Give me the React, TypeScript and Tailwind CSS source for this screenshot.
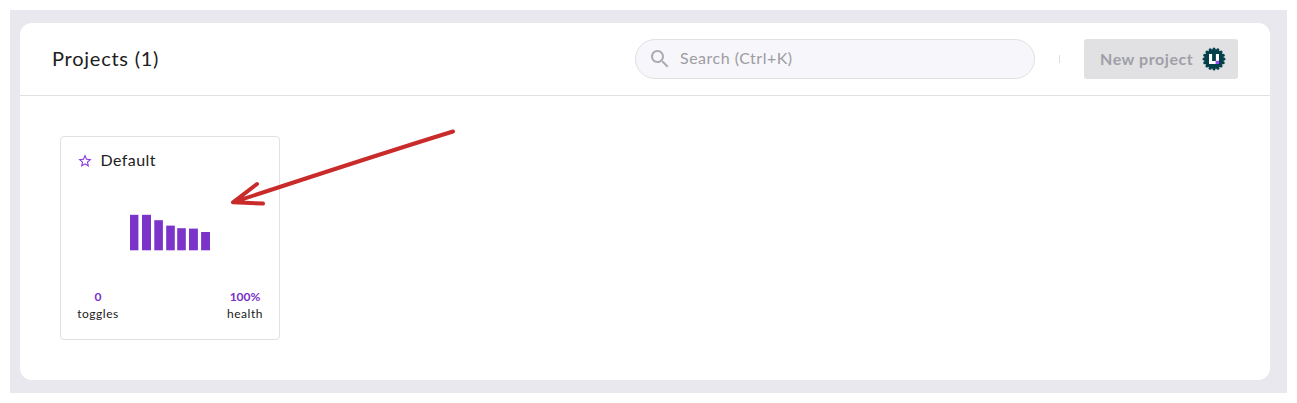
const bars = [
  { x: 0, w: 8.4, y: 0 },
  { x: 12, w: 9, y: 0 },
  { x: 24.3, w: 8.6, y: 5.4 },
  { x: 36.2, w: 8.6, y: 10.8 },
  { x: 47.2, w: 8.6, y: 13.4 },
  { x: 59, w: 8.9, y: 13.8 },
  { x: 71.1, w: 8.9, y: 17.2 },
];

function UnleashBadge() {
  const scallops = Array.from({ length: 16 }, (_, i) => {
    const a = (i * Math.PI) / 8;
    return { cx: 12 + 10 * Math.sin(a), cy: 12 - 10 * Math.cos(a) };
  });
  return (
    <svg className="ml-[9px] h-6 w-6 shrink-0" viewBox="0 0 24 24">
      <g fill="#04404a">
        <circle cx="12" cy="12" r="10" />
        {scallops.map((s, i) => (
          <circle key={i} cx={s.cx} cy={s.cy} r="1.5" />
        ))}
      </g>
      <path d="M7 7h3.1v6.9h3.8V7H17v10H7z" fill="#fff" />
      <path d="M13.6 13.8H17V17h-3.4z" fill="#9747ff" />
    </svg>
  );
}

function SearchBox() {
  return (
    <div className="flex h-10 w-[400px] items-center rounded-full border border-[#e1e1e3] bg-[#f6f6fb] pl-[12px]">
      <svg className="h-6 w-6" viewBox="0 0 24 24" fill="#adabb3">
        <path d="M15.5 14h-.79l-.28-.27C15.41 12.59 16 11.11 16 9.5 16 5.91 13.09 3 9.5 3S3 5.91 3 9.5 5.91 16 9.5 16c1.61 0 3.09-.59 4.23-1.57l.27.28v.79l5 4.99L20.49 19l-4.99-5zm-6 0C7.01 14 5 11.99 5 9.5S7.01 5 9.5 5 14 7.01 14 9.5 11.99 14 9.5 14z" />
      </svg>
      <span className="ml-[8px] pb-0.5 text-[16px] leading-5 tracking-[0.5px] text-[#9d9ca1]">Search (Ctrl+K)</span>
    </div>
  );
}

function ProjectCard() {
  return (
    <div className="relative flex h-[204px] w-[220px] flex-col rounded-[4px] border border-[#e1e1e3] px-4 pt-[14px]">
      <div className="flex h-5 items-center">
        <svg className="h-4 w-4" viewBox="0 0 24 24" fill="#8a35e0">
          <path d="m22 9.24-7.19-.62L12 2 9.19 8.63 2 9.24l5.46 4.73L5.82 21 12 17.27 18.18 21l-1.63-7.03L22 9.24zM12 15.4l-3.76 2.27 1-4.28-3.32-2.88 4.38-.38L12 6.1l1.71 4.04 4.38.38-3.32 2.88 1 4.28L12 15.4z" />
        </svg>
        <span className="ml-[7.5px] pb-0.5 text-[16px] leading-5 tracking-[0.45px] text-[#202021]">Default</span>
      </div>
      <svg className="mt-[43px] ml-[53px] h-9 w-20 overflow-visible" viewBox="0 0 80 36">
        {bars.map((b) => (
          <rect key={b.x} x={b.x} y={b.y + 0.8} width={b.w} height={35.5 - b.y} fill="#7b33c9" />
        ))}
      </svg>
      <div className="mt-[38px] flex justify-between text-center text-[12px] leading-[17px] text-[#202021]">
        <div className="w-[42px]">
          <div className="font-bold text-[#7a2fc8]">0</div>
          <div className="tracking-[0.5px]">toggles</div>
        </div>
        <div className="-mr-px w-[38px]">
          <div className="font-bold text-[#7a2fc8]">100%</div>
          <div className="tracking-[0.5px]">health</div>
        </div>
      </div>
      <svg
        className="pointer-events-none absolute top-[-17px] left-[159px] h-[100px] w-[250px]"
        viewBox="220 120 250 100"
        fill="none"
        stroke="#c92a2a"
        strokeWidth="4"
        strokeLinecap="round"
        strokeLinejoin="round"
      >
        <path d="M453 131.5 C380 154 310 177 233 202.3 M257 184 L233 202.3 L263 203.6" />
      </svg>
    </div>
  );
}

export default function App() {
  return (
    <div className="h-[403px] w-[1297px] bg-white p-[10px] font-['Lato',sans-serif]">
      <div className="h-[383px] bg-[#e9e8ee] pt-[13px] pr-[17px] pl-[10px]">
        <main className="h-[357px] rounded-[12px] bg-white">
          <header className="flex h-[73px] items-center border-b border-[#e1e1e3] pr-8 pl-8">
            <h1 className="pb-0.5 text-[20px] leading-6 tracking-[0.75px] text-[#202021]">Projects (1)</h1>
            <div className="ml-auto flex items-center">
              <SearchBox />
              <div className="ml-6 h-2 w-px bg-[#dfdfe2]" />
              <button className="ml-6 flex h-10 w-[154px] items-center rounded-[3px] bg-[#e1e1e3] pl-4 text-[16px] font-bold text-[#a09fa8]">
                <span className="w-[93px] whitespace-nowrap pb-px tracking-[0.55px]">New project</span>
                <UnleashBadge />
              </button>
            </div>
          </header>
          <div className="p-10">
            <ProjectCard />
          </div>
        </main>
      </div>
    </div>
  );
}
